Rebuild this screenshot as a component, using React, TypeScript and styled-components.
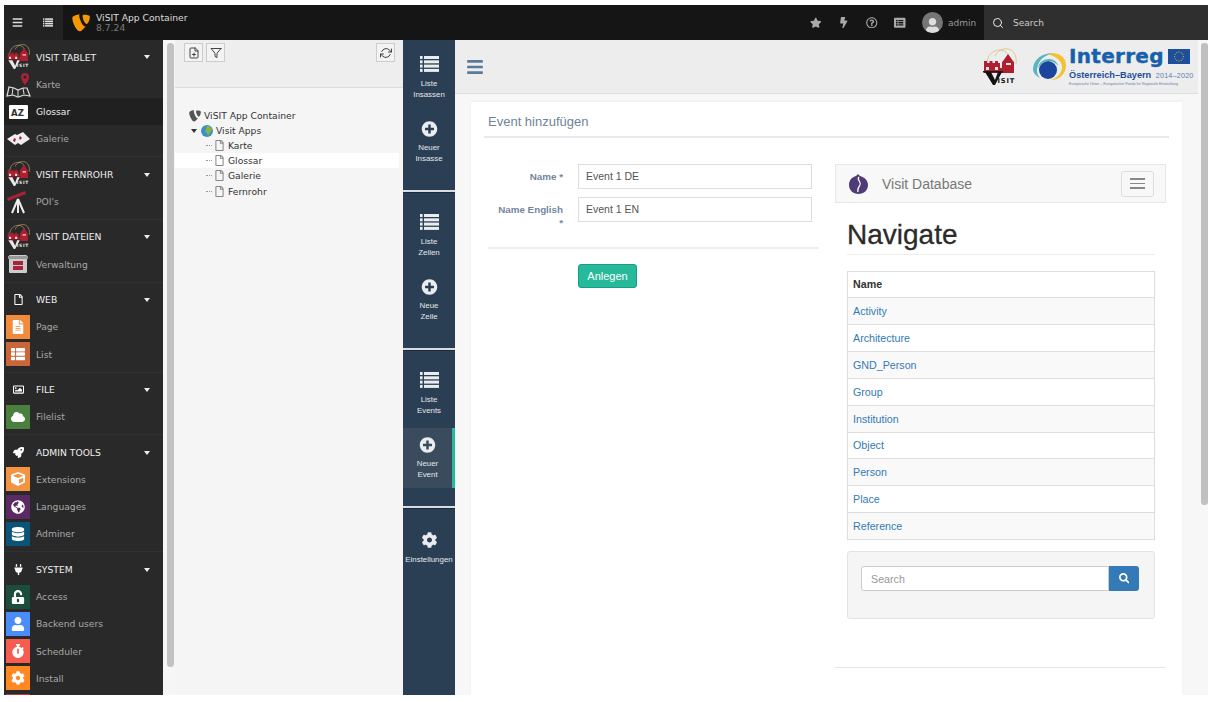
import React from "react"
import styled, { createGlobalStyle } from "styled-components"
import {
  FaBars,
  FaBolt,
  FaCog,
  FaCube,
  FaDatabase,
  FaFileAlt,
  FaGlobeAmericas,
  FaListAlt,
  FaPlug,
  FaPlusCircle,
  FaRegFile,
  FaRegImage,
  FaRegQuestionCircle,
  FaRocket,
  FaSearch,
  FaStar,
  FaThList,
  FaUnlockAlt,
  FaUser,
  FaCloud,
  FaStopwatch,
} from "react-icons/fa"
import { FiFilePlus, FiFilter, FiRefreshCw, FiSearch } from "react-icons/fi"

const Global = createGlobalStyle`
  html, body {
    margin: 0;
    padding: 0;
    background: #fff;
    overflow: hidden;
  }
  * {
    box-sizing: border-box;
  }
`

const Page = styled.div`
  width: 1214px;
  height: 702px;
  padding: 5px 6px 7px 4px;
  background: #fff;
`

const Frame = styled.div`
  display: flex;
  flex-direction: column;
  height: 100%;
  overflow: hidden;
  font-family: "DejaVu Sans", Verdana, sans-serif;
`

/* top bar */
const TopBar = styled.header`
  display: flex;
  align-items: stretch;
  flex: 0 0 35px;
  background: #151515;
`

const TopTools = styled.div`
  display: flex;
  align-items: center;
  width: 59px;
  padding-left: 8px;
  gap: 20px;
  background: #222;
  color: #ddd;
  font-size: 11px;
`

const Brand = styled.div`
  display: flex;
  align-items: center;
  gap: 6px;
  padding-left: 9px;
`

const BrandText = styled.div`
  font-size: 9.2px;
  line-height: 10px;
  color: #ddd;
  small {
    display: block;
    font-size: 9.2px;
    color: #7b7b7b;
  }
`

const TopRight = styled.div`
  display: flex;
  align-items: stretch;
  margin-left: auto;
  color: #aaa;
`

const TopIcon = styled.span`
  display: flex;
  align-items: center;
  justify-content: center;
  width: 28px;
  font-size: 11.5px;
`

const Avatar = styled.span`
  display: flex;
  align-items: flex-end;
  align-self: center;
  justify-content: center;
  width: 21px;
  height: 21px;
  margin-left: 8px;
  border-radius: 50%;
  overflow: hidden;
  background: #757575;
  color: #ddd;
  font-size: 15px;
`

const UserName = styled.span`
  align-self: center;
  width: 36px;
  margin-left: 5px;
  font-size: 9px;
  color: #999;
`

const TopSearch = styled.div`
  display: flex;
  align-items: center;
  gap: 9px;
  width: 224px;
  padding-left: 8px;
  background: #2f2f2f;
  color: #ccc;
  font-size: 9px;
  svg {
    font-size: 12px;
    color: #eee;
  }
`

const Body = styled.div`
  display: flex;
  flex: 1;
  min-height: 0;
`

/* module menu */
const Sidebar = styled.nav`
  flex: 0 0 159px;
  overflow: hidden;
  background: #292929;
`

const Group = styled.div`
  padding: 3.4px 0 3.8px;
  border-bottom: 1px solid #303030;
`

const Row = styled.div<{ $active?: boolean; $header?: boolean }>`
  position: relative;
  display: flex;
  align-items: center;
  height: 27.25px;
  padding-left: 2px;
  gap: 6px;
  font-size: 9.2px;
  color: ${(p) => (p.$active || p.$header ? "#eee" : "#a8a8a8")};
  background: ${(p) => (p.$active ? "#202020" : "transparent")};
`

const IconCell = styled.span<{ $bg?: string }>`
  display: flex;
  flex: 0 0 24px;
  min-width: 0;
  align-items: center;
  justify-content: center;
  height: 24px;
  font-size: ${(p) => (p.$bg ? "14px" : "11px")};
  color: #fff;
  background: ${(p) => p.$bg || "transparent"};
  svg {
    flex: none;
    overflow: visible;
  }
`

const Caret = styled.span`
  position: absolute;
  top: 12px;
  right: 13px;
  border: 3.5px solid transparent;
  border-top: 4px solid #eee;
  border-bottom: 0;
`

const SideScroll = styled.div`
  flex: 0 0 12px;
  padding: 3px 1px 28px 4px;
  background: #f6f6f6;
  &::after {
    content: "";
    display: block;
    height: 100%;
    border-radius: 4px;
    background: #c2c2c2;
  }
`

/* page tree */
const TreePanel = styled.section`
  flex: 0 0 228px;
  background: #f5f5f5;
`

const TreeToolbar = styled.div`
  display: flex;
  gap: 3px;
  height: 48px;
  padding: 3px 8px 0 9px;
  background: #eee;
  border-bottom: 1px solid #dcdcdc;
`

const ToolButton = styled.span<{ $right?: boolean }>`
  display: flex;
  align-items: center;
  justify-content: center;
  width: 19px;
  height: 19px;
  margin-left: ${(p) => (p.$right ? "auto" : 0)};
  font-size: 12px;
  color: #444;
  background: #f3f3f3;
  border: 1px solid #ccc;
`

const Tree = styled.div`
  padding-top: 20px;
  padding-right: 4px;
`

const TreeRow = styled.div<{ $indent: number; $active?: boolean }>`
  display: flex;
  align-items: center;
  gap: 3px;
  height: 15.1px;
  padding-left: ${(p) => p.$indent}px;
  font-size: 9.2px;
  color: #333;
  background: ${(p) => (p.$active ? "#fff" : "transparent")};
`

const TreeLine = styled.span`
  width: 6px;
  margin-left: 2px;
  margin-right: -1px;
  border-top: 1px dotted #999;
`

const TreeArrow = styled.span`
  margin-right: 1px;
  border: 3px solid transparent;
  border-top: 4px solid #333;
  border-bottom: 0;
`

/* blue section column */
const NavColumn = styled.aside`
  flex: 0 0 52px;
  background: #2b3f54;
  font-family: "Liberation Sans", Arial, sans-serif;
`

const NavSection = styled.div<{ $top: number }>`
  display: flex;
  flex-direction: column;
  gap: 5px;
  padding: ${(p) => p.$top}px 0 18px;
  & + & {
    border-top: 2px solid #d8dde2;
    box-shadow: inset 0 1px 0 #1a2a3a;
  }
`

const NavItem = styled.div<{ $active?: boolean }>`
  display: flex;
  flex-direction: column;
  align-items: center;
  height: 60px;
  padding-top: 9px;
  font-size: 7.9px;
  line-height: 11px;
  text-align: center;
  color: #e3e7ea;
  background: ${(p) => (p.$active ? "#3a4b5d" : "transparent")};
  border-right: ${(p) => (p.$active ? "3px solid #26b99a" : "0")};
  svg {
    flex: 0 0 16px;
    margin-bottom: 6px;
    font-size: 17px;
    color: #e9edef;
  }
`

const NavPlus = styled(FaPlusCircle)`
  && {
    margin-bottom: 5px;
  }
`

/* main area */
const Main = styled.main`
  display: flex;
  flex: 1;
  min-width: 0;
  font-family: "Liberation Sans", Arial, sans-serif;
`

const MainColumn = styled.div`
  display: flex;
  flex-direction: column;
  flex: 1;
  min-width: 0;
  background: #f7f7f7;
`

const MainScroll = styled.div`
  flex: 0 0 10px;
  padding: 3px 0 190px 3px;
  background: #f7f7f7;
  &::after {
    content: "";
    display: block;
    height: 100%;
    border-radius: 3px;
    background: #c0c0c0;
  }
`

const MainHeader = styled.div`
  display: flex;
  align-items: center;
  flex: 0 0 54px;
  padding: 0 8px 0 11px;
  background: #ededed;
  border-bottom: 1px solid #dadfe3;
  color: #5a7a99;
  font-size: 18px;
`

const Logos = styled.div`
  display: flex;
  align-items: center;
  gap: 14px;
  margin-left: auto;
`

const Interreg = styled.div`
  display: flex;
  align-items: center;
  gap: 2px;
`

const InterregText = styled.div`
  width: 121px;
  color: #1d4d9c;
  font-weight: bold;
`

const InterregTitle = styled.div`
  display: flex;
  justify-content: space-between;
  align-items: center;
  height: 19px;
  font-family: "DejaVu Sans", sans-serif;
  font-size: 20px;
  font-weight: bold;
  letter-spacing: 0.3px;
  color: #1660ac;
  -webkit-text-stroke: 0.4px #1660ac;
`

const InterregLine = styled.div`
  margin-top: 4px;
  font-size: 9.2px;
  line-height: 11px;
  white-space: nowrap;
  span {
    margin-left: 2px;
    font-weight: normal;
    color: #5d7fb3;
    font-size: 7.2px;
    letter-spacing: 0.2px;
  }
`

const InterregSmall = styled.div`
  font-size: 3.6px;
  font-weight: normal;
  line-height: 6px;
  white-space: nowrap;
  color: #5d7fb3;
`

const Content = styled.div`
  flex: 1;
  min-height: 0;
  padding: 8px 16px 0;
`

const Card = styled.div`
  height: 100%;
  padding: 10px 13px 0;
  overflow: hidden;
  background: #fff;
  box-shadow: 0 -1px 2px #eee;
`

const CardTitle = styled.h2`
  height: 26px;
  margin: 0 0 26px;
  padding-left: 4px;
  font-size: 13px;
  font-weight: normal;
  line-height: 20px;
  color: #6f8498;
  border-bottom: 2px solid #e6e9ed;
`

const Columns = styled.div`
  display: grid;
  grid-template-columns: 331px 331px;
  gap: 16px;
  padding-left: 4px;
`

const FieldRow = styled.div`
  display: grid;
  grid-template-columns: 75px 234px;
  gap: 15px;
  margin-bottom: 8px;
`

const FieldLabel = styled.label`
  padding: 6px 0 0 8px;
  font-size: 9.8px;
  font-weight: bold;
  line-height: 13px;
  text-align: right;
  color: #73879c;
`

const FieldValue = styled.div`
  height: 25px;
  padding-left: 7px;
  font-size: 10.5px;
  line-height: 23px;
  color: #555;
  border: 1px solid #ddd;
`

const FormRule = styled.hr`
  height: 2px;
  margin: 18px 0 14.5px;
  background: #eee;
  border: 0;
`

const SubmitButton = styled.button`
  display: block;
  width: 59px;
  height: 24px;
  margin-left: 90px;
  padding: 0;
  font-family: inherit;
  font-size: 11px;
  color: #fff;
  background: #26b99a;
  border: 1px solid #169f85;
  border-radius: 3px;
`

const DbNavbar = styled.div`
  display: flex;
  align-items: center;
  height: 39px;
  padding: 0 11px 0 12px;
  font-size: 14px;
  color: #777;
  background: #f8f8f8;
  border: 1px solid #e7e7e7;
`

const DbBrand = styled.span`
  margin-left: 13px;
`

const Toggle = styled.span`
  display: flex;
  flex-direction: column;
  justify-content: center;
  gap: 3px;
  width: 33px;
  height: 26px;
  margin-left: auto;
  padding: 0 8px;
  border: 1px solid #ddd;
  border-radius: 3px;
  i {
    display: block;
    height: 1.5px;
    background: #888;
  }
`

const DbBody = styled.div`
  padding: 0 11px 0 12px;
`

const DbHeading = styled.h1`
  height: 52px;
  margin: 0 0 15.5px;
  padding-top: 16px;
  font-size: 28px;
  font-weight: normal;
  line-height: 32px;
  color: #2b2b2b;
  -webkit-text-stroke: 0.3px #2b2b2b;
  border-bottom: 1px solid #eee;
`

const Table = styled.div`
  border: 1px solid #ddd;
  border-width: 1px 1px 0;
`

const TableRow = styled.div<{ $striped?: boolean; $head?: boolean }>`
  display: flex;
  align-items: center;
  height: 26.85px;
  padding-left: 5px;
  font-size: 10.7px;
  font-weight: ${(p) => (p.$head ? "bold" : "normal")};
  color: ${(p) => (p.$head ? "#333" : "#337ab7")};
  background: ${(p) => (p.$striped ? "#f9f9f9" : "#fff")};
  border-bottom: 1px solid #ddd;
`

const Well = styled.div`
  height: 68px;
  margin-top: 11px;
  padding: 14px 15px 14px 13px;
  background: #f5f5f5;
  border: 1px solid #e3e3e3;
  border-radius: 3px;
`

const SearchGroup = styled.div`
  display: flex;
  height: 25px;
`

const SearchField = styled.div`
  flex: 1;
  padding-left: 9px;
  font-size: 10.7px;
  line-height: 24px;
  color: #999;
  background: #fff;
  border: 1px solid #ccc;
  border-radius: 3px 0 0 3px;
`

const SearchButton = styled.span`
  display: flex;
  align-items: center;
  justify-content: center;
  flex: 0 0 30px;
  font-size: 10.5px;
  color: #fff;
  background: #337ab7;
  border-radius: 0 3px 3px 0;
`

const DbRule = styled.hr`
  height: 1px;
  margin: 48px 0 0;
  background: #e5e5e5;
  border: 0;
`

function ListGlyph({ width = 19, height = 16 }: { width?: number; height?: number }) {
  return (
    <svg width={width} height={height} viewBox="0 0 19 16" fill="currentColor">
      {[0, 4.3, 8.6, 12.9].map((y) => (
        <g key={y}>
          <rect x="0" y={y} width="2.6" height="3" />
          <rect x="4" y={y} width="15" height="3" />
        </g>
      ))}
    </svg>
  )
}

function Typo3Logo({ size, color }: { size: number; color: string }) {
  return (
    <svg width={size} height={size} viewBox="-2 0 26 24" fill={color}>
      <path d="M17.6 16.6c-.4.1-.7.2-1.1.2-3.3 0-8.1-11.5-8.1-15.3 0-1.4.3-1.9.8-2.3C5.2-.3.3 1.2-1 3.1c-.3.5-.5 1.3-.5 2.3C-1.5 11.4 4.8 24 9.3 24c2 0 5.5-3.3 8.3-7.4z" />
      <path d="M15.5 0c4.1 0 8.3.7 8.3 3 0 4.8-3 10.5-4.5 10.5-2.7 0-6-7.5-6-11.3C13.3.5 14 0 15.5 0z" />
    </svg>
  )
}

function VisitLogo({ width = 23, ink = "#e8e8e8" }: { width?: number; ink?: string }) {
  return (
    <svg width={width} height={width * (38 / 34)} viewBox="0 0 34 38">
      <g fill="none" stroke="#dcc07a" strokeWidth="0.8">
        <path d="M4 16C4 7 10 2 17 2c4 0 7 2 9 6" />
        <path d="M12 8c2-5 8-8 13-7 6 1 9 7 8 15" />
      </g>
      <path d="M1 13h3v2h2.5v-2h3v2H12v-2h3v2h2v5h2v-6l1-1 5-7 5 7 1 1v11H1z" fill="#b01f30" />
      <path d="M3 19h3v3H3zM12 19h3v3h-3zM23 15h5v2h-5z" fill="#f2e4d6" />
      <path d="M0 23h20v1.5H0z" fill="#1a1a1a" />
      <path d="M2 24h6l4 8 3-8h4l-7 13h-2z" fill={ink} />
      <text x="14.5" y="34.5" fontSize="6.6" fontWeight="bold" fontFamily="DejaVu Sans, sans-serif" fill={ink} letterSpacing="0.9">
        ISIT
      </text>
    </svg>
  )
}

function KarteIcon() {
  return (
    <svg width="25" height="25" viewBox="0 0 25 25">
      <path d="M1 24l2-9 5 1 4 2 5-2 4 0 3 8-6-1-6 2-5-2z" fill="none" stroke="#ddd" strokeWidth="1.2" />
      <path d="M7 16l-1 7M17 16l1 6M12 18v6" stroke="#ddd" strokeWidth="1" />
      <path d="M19 1a4 4 0 0 1 4 4c0 3-4 8-4 8s-4-5-4-8a4 4 0 0 1 4-4z" fill="#a8233a" />
      <circle cx="19" cy="5" r="1.6" fill="#292929" />
    </svg>
  )
}

function GlossarIcon() {
  return (
    <svg width="19" height="14" viewBox="0 0 19 14">
      <rect width="19" height="14" fill="#fff" rx="1" />
      <text x="2" y="10.5" fontSize="8.6" fontWeight="bold" fontFamily="DejaVu Sans, sans-serif" fill="#333">
        AZ
      </text>
    </svg>
  )
}

function GalerieIcon() {
  return (
    <svg width="23" height="14" viewBox="0 0 23 14">
      <path d="M0 7l8-5 2 1 6-3 7 7-9 6-3-2-3 2z" fill="#eee" />
      <path d="M7 6l2 1-1 3-2-1zM13 4l2 2-2 2-1-2z" fill="#a8233a" />
    </svg>
  )
}

function TelescopeIcon() {
  return (
    <svg width="24" height="24" viewBox="0 0 24 24">
      <path d="M1 9l18-7 1 3-18 7z" fill="#a8233a" />
      <path d="M12 10L6 24M12 10l6 14M12 10v14" stroke="#eee" strokeWidth="2" fill="none" />
    </svg>
  )
}

function CabinetIcon() {
  return (
    <svg width="20" height="20" viewBox="0 0 20 20">
      <rect x="1" y="1" width="18" height="18" rx="1" fill="#ccc" />
      <rect y="2" width="20" height="3" fill="#999" />
      <rect x="5" y="7" width="10" height="4" fill="#a8233a" />
      <rect x="5" y="12" width="10" height="4" fill="#a8233a" />
    </svg>
  )
}

function TreeGlobe() {
  return (
    <svg width="12" height="12" viewBox="0 0 12 12">
      <circle cx="6" cy="6" r="6" fill="#3a8fd0" />
      <path d="M6 1c3 0 5 2 5 4l-2 3-2 3-1-3-2-1 1-3z" fill="#8ab43a" />
    </svg>
  )
}

function EuFlag() {
  const stars = Array.from({ length: 12 }, (_, i) => {
    const a = (i / 12) * Math.PI * 2
    return <circle key={i} cx={11 + Math.cos(a) * 4.4} cy={7.5 + Math.sin(a) * 4.4} r="0.5" fill="#ffd617" />
  })
  return (
    <svg width="22" height="15" viewBox="0 0 22 15">
      <rect width="22" height="15" fill="#1f4f9c" />
      {stars}
    </svg>
  )
}

function Swirl() {
  return (
    <svg width="36" height="32" viewBox="0 0 36 32">
      <circle cx="17" cy="19" r="9" fill="#1c469b" />
      <path d="M2 18C2 8 12 1 25 2 15 3 7 8 6 19c0 3 1 6 3 8-4-2-7-5-7-9z" fill="#5bb4c1" />
      <path d="M16 3c10-3 19 2 19 11 0 9-7 15-15 15 6-2 11-7 11-13 0-6-6-11-15-13z" fill="#f2c230" />
      <path d="M7 17c1-6 6-9 11-9 5 0 8 3 9 7-2-3-5-5-9-5-4 0-8 3-11 7z" fill="#5bb4c1" />
    </svg>
  )
}

function DbLogo() {
  return (
    <svg width="21" height="22" viewBox="0 0 21 22">
      <path d="M10 1l2 2c4 1 8 4 8 9 0 5-4 9-9.500 9S1 17 1 12c0-5 3-8 7-9z" fill="#4f3b78" />
      <path d="M11 4c-3 3 3 5 1 8s-3 4-2 7" fill="none" stroke="#f8f8f8" strokeWidth="1.3" />
    </svg>
  )
}

const groups = [
  {
    title: "VISIT TABLET",
    icon: <VisitLogo />,
    items: [
      { label: "Karte", icon: <KarteIcon /> },
      { label: "Glossar", icon: <GlossarIcon />, active: true },
      { label: "Galerie", icon: <GalerieIcon /> },
    ],
  },
  { title: "VISIT FERNROHR", icon: <VisitLogo />, items: [{ label: "POI's", icon: <TelescopeIcon /> }] },
  { title: "VISIT DATEIEN", icon: <VisitLogo />, items: [{ label: "Verwaltung", icon: <CabinetIcon /> }] },
  {
    title: "WEB",
    icon: <FaRegFile />,
    items: [
      { label: "Page", bg: "#f08a3c", icon: <FaFileAlt /> },
      { label: "List", bg: "#c9663a", icon: <FaThList /> },
    ],
  },
  { title: "FILE", icon: <FaRegImage />, items: [{ label: "Filelist", bg: "#4a7f3e", icon: <FaCloud /> }] },
  {
    title: "ADMIN TOOLS",
    icon: <FaRocket />,
    items: [
      { label: "Extensions", bg: "#f29442", icon: <FaCube /> },
      { label: "Languages", bg: "#5b2a63", icon: <FaGlobeAmericas /> },
      { label: "Adminer", bg: "#0a5478", icon: <FaDatabase /> },
    ],
  },
  {
    title: "SYSTEM",
    icon: <FaPlug />,
    items: [
      { label: "Access", bg: "#1a4d3c", icon: <FaUnlockAlt /> },
      { label: "Backend users", bg: "#4b8df8", icon: <FaUser /> },
      { label: "Scheduler", bg: "#f85c50", icon: <FaStopwatch /> },
      { label: "Install", bg: "#ff8820", icon: <FaCog /> },
      { label: "", bg: "#c8323c", icon: null },
    ],
  },
]

const tables = ["Activity", "Architecture", "GND_Person", "Group", "Institution", "Object", "Person", "Place", "Reference"]

const pages = ["Karte", "Glossar", "Galerie", "Fernrohr"]

export default function App() {
  return (
    <Page>
      <Global />
      <Frame>
        <TopBar>
          <TopTools>
            <FaBars />
            <ListGlyph width={10} height={11} />
          </TopTools>
          <Brand>
            <Typo3Logo size={18} color="#f49700" />
            <BrandText>
              ViSIT App Container
              <small>8.7.24</small>
            </BrandText>
          </Brand>
          <TopRight>
            <TopIcon><FaStar /></TopIcon>
            <TopIcon><FaBolt /></TopIcon>
            <TopIcon><FaRegQuestionCircle /></TopIcon>
            <TopIcon><FaListAlt /></TopIcon>
            <Avatar><FaUser /></Avatar>
            <UserName>admin</UserName>
            <TopSearch>
              <FiSearch />
              Search
            </TopSearch>
          </TopRight>
        </TopBar>
        <Body>
          <Sidebar>
            {groups.map((g) => (
              <Group key={g.title}>
                <Row $header>
                  <IconCell>{g.icon}</IconCell>
                  {g.title}
                  <Caret />
                </Row>
                {g.items.map((item) => (
                  <Row key={item.label} $active={"active" in item && item.active}>
                    <IconCell $bg={"bg" in item ? item.bg : undefined}>{item.icon}</IconCell>
                    {item.label}
                  </Row>
                ))}
              </Group>
            ))}
          </Sidebar>
          <SideScroll />
          <TreePanel>
            <TreeToolbar>
              <ToolButton><FiFilePlus /></ToolButton>
              <ToolButton><FiFilter /></ToolButton>
              <ToolButton $right><FiRefreshCw /></ToolButton>
            </TreeToolbar>
            <Tree>
              <TreeRow $indent={14}>
                <Typo3Logo size={12} color="#555" />
                ViSIT App Container
              </TreeRow>
              <TreeRow $indent={16}>
                <TreeArrow />
                <TreeGlobe />
                Visit Apps
              </TreeRow>
              {pages.map((name) => (
                <TreeRow key={name} $indent={29} $active={name === "Glossar"}>
                  <TreeLine />
                  <FaRegFile color="#888" size={11} />
                  {name}
                </TreeRow>
              ))}
            </Tree>
          </TreePanel>
          <NavColumn>
            <NavSection $top={7}>
              <NavItem><ListGlyph />Liste<br />Insassen</NavItem>
              <NavItem><NavPlus />Neuer<br />Insasse</NavItem>
            </NavSection>
            <NavSection $top={13}>
              <NavItem><ListGlyph />Liste<br />Zeilen</NavItem>
              <NavItem><NavPlus />Neue<br />Zeile</NavItem>
            </NavSection>
            <NavSection $top={13}>
              <NavItem><ListGlyph />Liste<br />Events</NavItem>
              <NavItem $active><NavPlus />Neuer<br />Event</NavItem>
            </NavSection>
            <NavSection $top={15}>
              <NavItem><FaCog />Einstellungen</NavItem>
            </NavSection>
          </NavColumn>
          <Main>
            <MainColumn>
              <MainHeader>
                <FaBars />
                <Logos>
                  <VisitLogo width={34} ink="#111" />
                  <Interreg>
                    <Swirl />
                    <InterregText>
                      <InterregTitle>
                        Interreg
                        <EuFlag />
                      </InterregTitle>
                      <InterregLine>
                        Österreich–Bayern <span>2014–2020</span>
                      </InterregLine>
                      <InterregSmall>Europäische Union – Europäischer Fonds für Regionale Entwicklung</InterregSmall>
                    </InterregText>
                  </Interreg>
                </Logos>
              </MainHeader>
              <Content>
                <Card>
                  <CardTitle>Event hinzufügen</CardTitle>
                  <Columns>
                    <div>
                      <FieldRow>
                        <FieldLabel>Name *</FieldLabel>
                        <FieldValue>Event 1 DE</FieldValue>
                      </FieldRow>
                      <FieldRow>
                        <FieldLabel>Name English *</FieldLabel>
                        <FieldValue>Event 1 EN</FieldValue>
                      </FieldRow>
                      <FormRule />
                      <SubmitButton>Anlegen</SubmitButton>
                    </div>
                    <div>
                      <DbNavbar>
                        <DbLogo />
                        <DbBrand>Visit Database</DbBrand>
                        <Toggle><i /><i /><i /></Toggle>
                      </DbNavbar>
                      <DbBody>
                        <DbHeading>Navigate</DbHeading>
                        <Table>
                          <TableRow $head>Name</TableRow>
                          {tables.map((name, i) => (
                            <TableRow key={name} $striped={i % 2 === 0}>{name}</TableRow>
                          ))}
                        </Table>
                        <Well>
                          <SearchGroup>
                            <SearchField>Search</SearchField>
                            <SearchButton><FaSearch /></SearchButton>
                          </SearchGroup>
                        </Well>
                      </DbBody>
                      <DbRule />
                    </div>
                  </Columns>
                </Card>
              </Content>
            </MainColumn>
            <MainScroll />
          </Main>
        </Body>
      </Frame>
    </Page>
  )
}
